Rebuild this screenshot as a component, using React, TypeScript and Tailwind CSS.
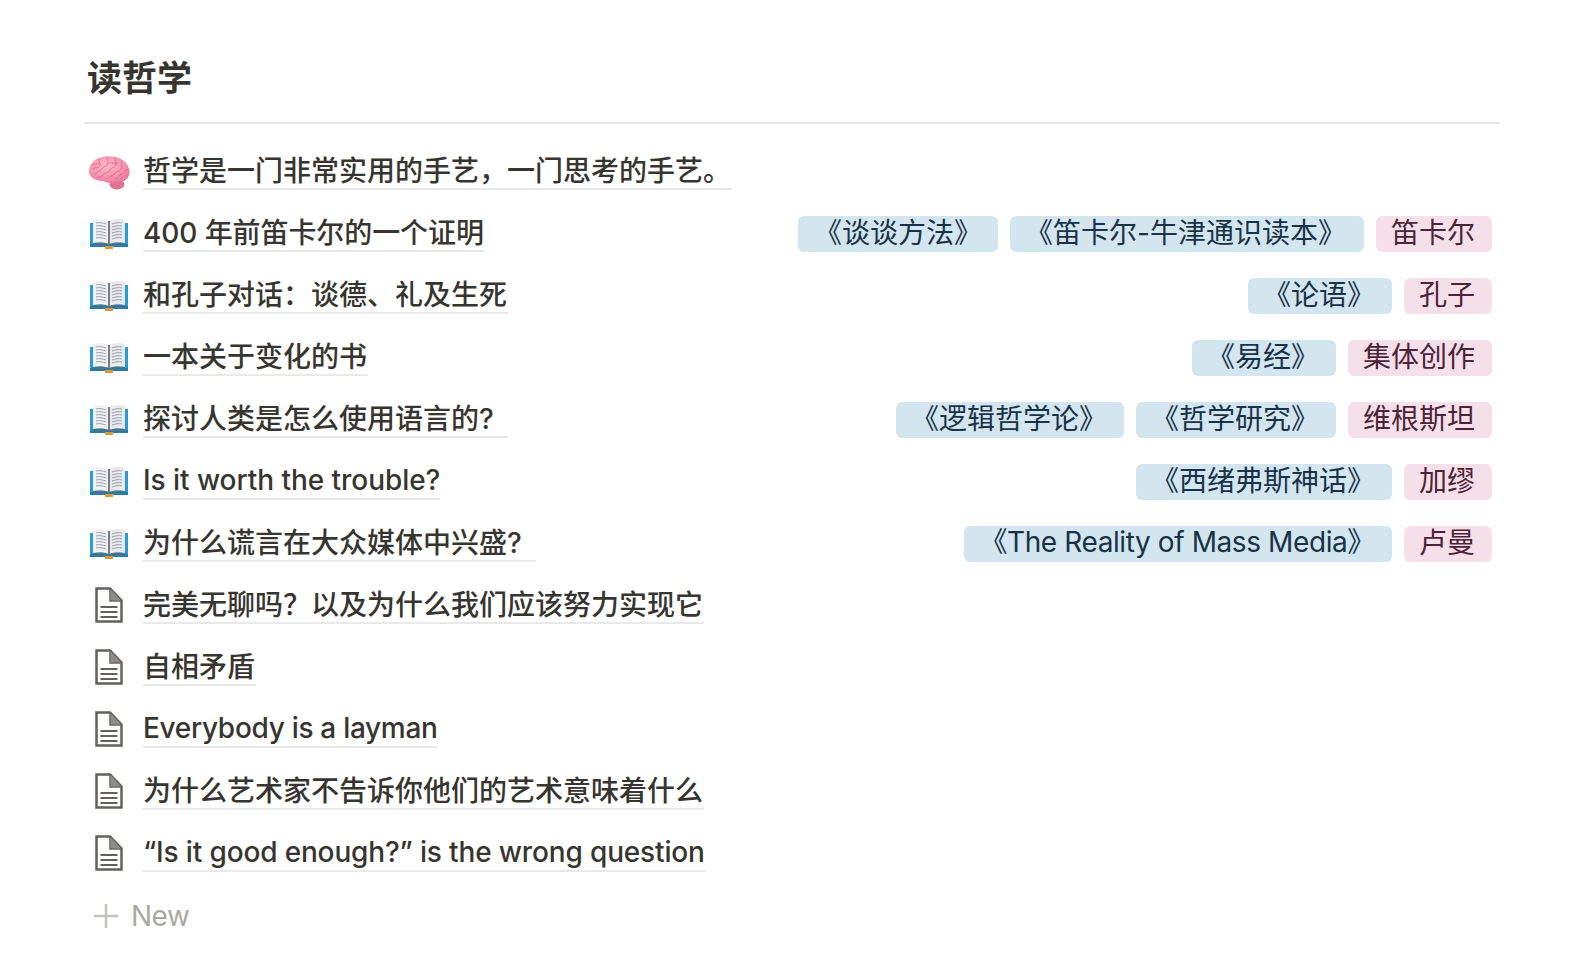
import React from "react";

type Kind = "brain" | "book" | "file";
interface Row { icon: Kind; title: string; works?: string[]; author?: string; cls?: string }

const rows: Row[] = [
  { icon: "brain", title: "哲学是一门非常实用的手艺，一门思考的手艺。", cls: "leading-[34px] pr-px" },
  { icon: "book", title: "400 年前笛卡尔的一个证明", works: ["《谈谈方法》", "《笛卡尔-牛津通识读本》"], author: "笛卡尔", cls: "leading-[34px] tracking-[-0.08px]" },
  { icon: "book", title: "和孔子对话：谈德、礼及生死", works: ["《论语》"], author: "孔子", cls: "leading-[34px] pr-px" },
  { icon: "book", title: "一本关于变化的书", works: ["《易经》"], author: "集体创作", cls: "leading-[34px] pr-px" },
  { icon: "book", title: "探讨人类是怎么使用语言的?", works: ["《逻辑哲学论》", "《哲学研究》"], author: "维根斯坦", cls: "leading-[34px] pr-[14px]" },
  { icon: "book", title: "Is it worth the trouble?", works: ["《西绪弗斯神话》"], author: "加缪", cls: "leading-[32px] pb-[2px] tracking-[-0.05px]" },
  { icon: "book", title: "为什么谎言在大众媒体中兴盛?", works: ["《The Reality of Mass Media》"], author: "卢曼", cls: "leading-[34px] pr-[14px]" },
  { icon: "file", title: "完美无聊吗？以及为什么我们应该努力实现它", cls: "leading-[34px] pr-px" },
  { icon: "file", title: "自相矛盾", cls: "leading-[34px] pr-px" },
  { icon: "file", title: "Everybody is a layman", cls: "leading-[32px] pb-[2px] tracking-[-0.3px]" },
  { icon: "file", title: "为什么艺术家不告诉你他们的艺术意味着什么", cls: "leading-[34px] pr-px" },
  { icon: "file", title: "“Is it good enough?” is the wrong question", cls: "leading-[32px] pb-[2px] tracking-[-0.15px]" },
];

function Brain() {
  return (
    <svg width="42" height="34" viewBox="0 0 42 34" fill="none" className="mt-1">
      <defs>
        <radialGradient id="br" cx="42%" cy="35%" r="75%">
          <stop offset="0" stopColor="#fbb6c7" />
          <stop offset="0.65" stopColor="#f48fab" />
          <stop offset="1" stopColor="#e56d92" />
        </radialGradient>
      </defs>
      <ellipse cx="29" cy="28.5" rx="7.5" ry="5" fill="#e0738f" />
      <path d="M1 17C0.5 10 5 4 11 2C17 -0.5 26 -0.5 32 2.5C38 5.5 42 11 41.5 17C41 22 37.5 25 33 25.5C29 26 27 26 24 27C20 27.5 17 25.5 14 25C9 24.5 3 23 1 17Z" fill="url(#br)" />
      <g stroke="#dc6187" strokeWidth="1" strokeLinecap="round" fill="none" opacity="0.7">
        <path d="M11 3C10 6 13 7 12 10C11 12 7 11 5 13" />
        <path d="M19 1.5C18 4 21 5 20 8C19 11 15 10 14 13C13 15 9 15 7 18" />
        <path d="M27 2C26 5 29 6 28 9C27 12 23 11 22 14C21 17 17 16 15 19C14 21 11 21 9 22" />
        <path d="M34 5C32 8 35 10 33 13C31 16 28 15 26 18C24 21 21 20 19 23" />
        <path d="M40 13C37 13 37 17 34 18C31 19 30 22 27 23" />
        <path d="M4 9C7 9 8 7 11 8" />
        <path d="M22 7C25 6 26 8 30 7" />
      </g>
    </svg>
  );
}

function Book() {
  return (
    <svg width="40" height="32" viewBox="0 0 40 32" fill="none">
      <path d="M1 6H39V29H1Z" fill="#2a9bd0" />
      <path d="M1 27H39V30H1Z" fill="#1f7fb0" />
      <path d="M4 26H36V28H4Z" fill="#5f6b76" />
      <path d="M16 29H24V32H16Z" fill="#d79b3c" />
      <path d="M4 3C9 1 15 2 20 4V27C15 25 9 25 4 26Z" fill="#f0f1f3" />
      <path d="M36 3C31 1 25 2 20 4V27C25 25 31 25 36 26Z" fill="#e8e9ec" />
      <path d="M20 4V27" stroke="#59616c" strokeWidth="1.6" />
      <g stroke="#9aa0ab" strokeWidth="1">
        <path d="M7 6C10 5 14 6 17 7M7 9C10 8 14 9 17 10M7 12C10 11 14 12 17 13M7 15C10 14 14 15 17 16M7 18C10 17 14 18 17 19M7 21C10 20 14 21 17 22" />
        <path d="M33 6C30 5 26 6 23 7M33 9C30 8 26 9 23 10M33 12C30 11 26 12 23 13M33 15C30 14 26 15 23 16M33 18C30 17 26 18 23 19M33 21C30 20 26 21 23 22" />
      </g>
    </svg>
  );
}

function FileIcon() {
  return (
    <svg width="28" height="36" viewBox="0 0 28 36" fill="none" stroke="#62615e" strokeWidth="2.5">
      <path d="M1.5 1.5H15L26.5 13.5V34.5H1.5Z" />
      <path d="M15.5 1.5V13.5H26.5" />
      <path d="M15.5 2L26 13.5H15.5Z" fill="#8e8d8a" stroke="none" />
      <path d="M5.5 20H22.5M5.5 25H22.5M5.5 30H22.5" strokeWidth="2" />
    </svg>
  );
}

function Icon({ kind }: { kind: Kind }) {
  if (kind === "brain") return <Brain />;
  if (kind === "book") return <Book />;
  return <FileIcon />;
}

function join(...parts: (string | undefined)[]) {
  return parts.filter(Boolean).join(" ");
}

function Tag({ children, pink, cls }: { children: React.ReactNode; pink?: boolean; cls?: string }) {
  return (
    <span
      className={join(
        "h-9 rounded-md text-[28px] whitespace-nowrap",
        pink ? "bg-[#f5e0e9] text-[#4c2337]" : "bg-[#d3e5ef] text-[#183347]",
        cls ?? "pl-[15px] pr-[17px] leading-[34px]"
      )}
    >
      {children}
    </span>
  );
}

const workCls: Record<string, string> = {
  "《谈谈方法》": "px-4 leading-[34px]",
  "《笛卡尔-牛津通识读本》": "pl-[15px] pr-[18px] leading-[34px]",
  "《The Reality of Mass Media》": "pl-[15px] pr-[17px] leading-[32px] tracking-[-0.4px]",
};

export default function App() {
  return (
    <div className="w-[1584px] h-[962px] overflow-hidden bg-white pl-[84px] pr-[84px] text-[#37352f] font-['Inter','Noto_Sans_CJK_SC',sans-serif]">
      <div className="h-[122px] pl-[3px] pt-[54px]">
        <h1 className="text-[35px] leading-[48px] font-semibold">读哲学</h1>
      </div>
      <div className="h-0.5 bg-[#e9e9e7]" />
      <div className="mt-[15px]">
        {rows.map((r) => (
          <div key={r.title} className="h-[62px] flex items-start pt-[15px] pr-2">
            <div className="w-[59px] -mt-px shrink-0 flex justify-center pr-[13px] pl-1 h-9 items-center">
              <Icon kind={r.icon} />
            </div>
            <span
              className={join(
                "text-[28px] font-medium border-b-2 border-[#e9e9e7] whitespace-nowrap",
                r.cls
              )}
            >
              {r.title}
            </span>
            <div className="ml-auto flex gap-3">
              {r.works?.map((w) => <Tag key={w} cls={workCls[w]}>{w}</Tag>)}
              {r.author && <Tag pink>{r.author}</Tag>}
            </div>
          </div>
        ))}
      </div>
      <div className="flex items-center pl-[9px] h-9 mt-[15px]">
        <svg width="26" height="26" viewBox="0 0 26 26" stroke="#c4c3c0" strokeWidth="2.5">
          <path d="M13 1V25M1 13H25" />
        </svg>
        <span className="ml-[12px] text-[28px] leading-9 tracking-[-0.5px] text-[#a9a8a5]">New</span>
      </div>
    </div>
  );
}
